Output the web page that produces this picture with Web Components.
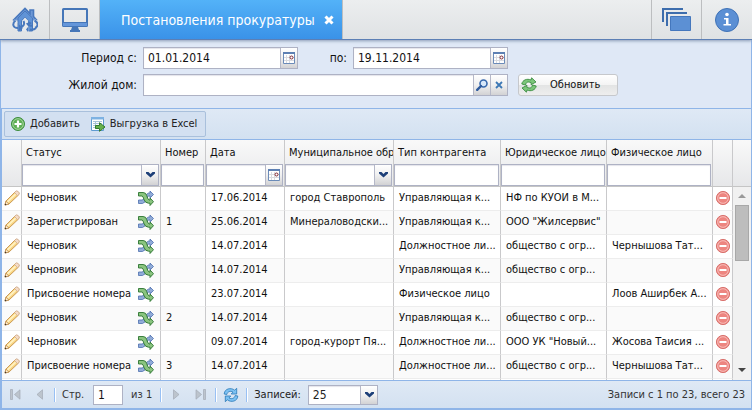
<!DOCTYPE html>
<html lang="ru">
<head>
<meta charset="utf-8">
<title>Постановления прокуратуры</title>
<style>
  body { margin: 0; font: 11px/16px "DejaVu Sans Condensed", "DejaVu Sans", sans-serif; color: #111; }
</style>
</head>
<body>
<registry-page></registry-page>
<script>
const ICONS = {
  home: ['0 0 26 26', `<g fill="none" stroke="#4878bd" stroke-linejoin="miter"><path d="M1 13.500L13 1.500l5 5V3h3.500v6.500L25 13.500" stroke-width="1.600" fill="#6d98d6"/><path d="M6 24V11l7-7 7.500 7v13h-4V14L13 10l-3.500 4v10z" fill="#6093d6" stroke-width="1"/></g><path d="M10 24V14l3-3.500 3.300 3.500v10z" fill="#e6e9ec"/><g fill="none" stroke="#e6e9ec" stroke-width="4"><path d="M4 14c-3 3-3 7 1 7M22 14c4 2 4 5 1 6.500"/></g><g fill="none" stroke="#4878bd" stroke-width="2"><path d="M3.500 13.500c-3.500 3-3 7.500 2.500 7.500M11.500 14c1.500 3 0 5.500-3 6M22.500 13.500c4 2 4 6 .5 7.500M24 21c-1.500 1.500-3.500 2-6 1.500M15 16c1 2.500 3 3 5 2.500"/></g><path d="M7 17.500l4 3.500-4 3zM20 16l-4-2v5zM16 20v5l-2-2.500z" fill="#4878bd"/>`],
  monitor: ['0 0 26 24', `<path fill="#4576b8" fill-rule="evenodd" d="M1.500 0h23Q26 0 26 1.500v16q0 1.500-1.500 1.500h-23Q0 19 0 17.500v-16Q0 0 1.500 0zM2 2v12h22V2z"/><path fill="#6496da" d="M1 15h24v3H1z"/><path fill="#4576b8" d="M10 19h6l1 3h1v2H8v-2h1z"/>`],
  windows: ['0 0 30 23', `<path fill="#3d6dad" d="M0 0h21v2H2v12H0zM4 4h21v2H6v12H4z"/><path fill="#5c90d4" stroke="#4477bd" d="M8.500 8.500h20v14h-20z"/>`],
  info: ['0 0 24 24', `<circle cx="12" cy="12" r="11.500" fill="#5b8fd4" stroke="#3f72b6"/><circle cx="12" cy="6.500" r="1.800" fill="#fff"/><path fill="#fff" d="M9 10h4.500v6H16v1.500H8.500V16H11v-4.500H9z"/>`],
  close: ['0 0 10 10', `<path d="M1.500 1.500l7 7M8.500 1.500l-7 7" stroke="#fff" stroke-width="3"/>`],
  calendar: ['0 0 12 12', `<path fill="#fff" stroke="#6b8bb8" d="M.5 1.500h11v10H.5z"/><path fill="#5d80b3" d="M0 0h12v2H0z"/><path stroke="#d9dbe0" d="M1 5.500h10M1 8.500h10M3.500 3v8M6.500 3v8"/><circle cx="8.500" cy="5.500" r="1.500" fill="#fff" stroke="#7d2430"/>`],
  search: ['0 0 12 12', `<circle cx="7.500" cy="4.500" r="3.500" fill="#d7e8fa" stroke="#3869ad" stroke-width="1.600"/><path d="M5 7L1.200 10.800" stroke="#2f5c9e" stroke-width="2.400" stroke-linecap="round"/>`],
  clear: ['0 0 8 8', `<path d="M1 1l6 6M7 1L1 7" stroke="#3d78b5" stroke-width="1.800"/>`],
  chevron: ['0 0 9 6', `<path d="M0 0h2.500L4.500 2 6.500 0H9v1.500L4.500 5.500 0 1.500z" fill="#1d3f78"/>`],
  refreshGreen: ['0 0 16 16', `<g fill="#7cc67a" stroke="#3c8d42" stroke-width=".9" stroke-linejoin="round"><path d="M.8 7C1.500 3 6 1.200 10 3l.6-2.200L15 5l-5 2.700.2-2C7 4.300 5 5 4.600 8z"/><path d="M15.200 9C14.500 13 10 14.800 6 13l-.6 2.200L1 11l5-2.700-.2 2C9 11.700 11 11 11.400 8z"/></g>`],
  refreshBlue: ['0 0 16 16', `<g fill="#7cc1f2" stroke="#2878b8" stroke-width=".8" stroke-linejoin="round"><path d="M1.200 7C1.500 1.500 8 .2 11.700 3.200l2-1.900V7H8.200l1.800-1.900C7.500 3.500 4.500 4.500 3.800 7.500z"/><path d="M14.800 9C14.500 14.500 8 15.800 4.300 12.800l-2 1.900V9h5.500L6 10.900c2.500 1.600 5.500.6 6.200-2.400z"/></g>`],
  add: ['0 0 16 16', `<circle cx="8" cy="8" r="6.500" fill="#5eae55" stroke="#3c8c3c"/><circle cx="8" cy="8" r="5.300" fill="none" stroke="#a5d69d"/><path d="M8 4.500v7M4.500 8h7" stroke="#fff" stroke-width="2.200"/>`],
  excel: ['0 0 16 16', `<path fill="#fff" stroke="#5f9bd0" d="M1.500 1.500h12v13h-12z"/><path fill="#7eb2e2" d="M1 1h13v2.500H1z"/><path stroke="#a9c3d8" d="M3 5.500h9M3 7.500h9M3 9.500h5M3 11.500h4M5.500 5v8"/><path fill="#67b14c" stroke="#327a2d" d="M5.500 9.500h4v-2.800L15 11l-5.500 4.300v-2.800h-4z"/>`],
  pencil: ['0 0 16 16', `<path d="M1 15l1-4L11 2Q12.500.8 14 2t.5 3L5 14z" fill="#f9d683" stroke="#c6924a" stroke-width=".9"/><path d="M3.500 11.800l8.500-8" stroke="#fff2c4" stroke-width="1.600"/><path d="M10.500 2.500l3 3.200 1.500-1.200Q16 2.800 14.200 1.500T11.500 1.500z" fill="#f5dcc8" stroke="#c9a382" stroke-width=".7"/><path d="M1 15l.9-3.800 3 2.800z" fill="#fff2d8" stroke="#b98340" stroke-width=".7"/><path d="M.7 15.300l.6-1.800 1.300 1.200z" fill="#333"/>`],
  shuffle: ['0 0 16 16', `<path fill="#91acd8" stroke="#4d6fae" stroke-width=".8" d="M.5 10h3.500Q6 10 7 7t3.500-4H12V1l3.500 3.500L12 8V6h-1.500Q9.500 6.300 9 9t-4.500 4.500h-4z"/><path fill="#8ac47f" stroke="#2b7430" stroke-width=".9" d="M.5 2.500H5q3 0 3.700 3T11 10h1V8l3.500 3.700L12 15.500v-2.300h-1.500Q7 13 6 9.500T4 6H.5z"/>`],
  remove: ['0 0 16 16', `<circle cx="8" cy="8" r="6.600" fill="#ed8580" stroke="#d9736f"/><circle cx="8" cy="8" r="5.300" fill="none" stroke="#f8bcb8"/><path fill="#fff" d="M4.500 7h7v2h-7z"/>`],
  first: ['0 0 11 11', `<path fill="#bcc4cd" stroke="#a3abb6" stroke-width=".7" d="M.5.500h2v10h-2zM10 .8v9.400L4.500 5.500z"/>`],
  prev: ['0 0 11 11', `<path fill="#bcc4cd" stroke="#a3abb6" stroke-width=".7" d="M8.500.8v9.400L3 5.500z"/>`],
  next: ['0 0 11 11', `<path fill="#bcc4cd" stroke="#a3abb6" stroke-width=".7" d="M2.500.8v9.400L8 5.500z"/>`],
  last: ['0 0 11 11', `<path fill="#bcc4cd" stroke="#a3abb6" stroke-width=".7" d="M8.500.500h2v10h-2zM1 .8v9.400L6.500 5.500z"/>`],
  up: ['0 0 8 4', `<path fill="#999" d="M0 4l4-4 4 4z"/>`],
  down: ['0 0 8 4', `<path fill="#444" d="M0 0l4 4 4-4z"/>`]
};

const base = `<style>
  *, ::before, ::after { box-sizing: border-box; }
  :host([hidden]) { display: none; }
  button, input, select { font: inherit; color: inherit; margin: 0; padding: 0; border: 0; border-radius: 0; background: none; appearance: none; min-width: 0; outline-offset: -1px; }
  button { display: flex; align-items: center; justify-content: center; cursor: pointer; }
</style>`;

class Base extends HTMLElement {
  connectedCallback() {
    if (this.shadowRoot) return;
    const t = document.createElement('template');
    t.innerHTML = base + this.render();
    this.attachShadow({ mode: 'open' }).append(t.content.cloneNode(true));
  }
}

customElements.define('ui-icon', class extends Base {
  render() {
    const [box, body] = ICONS[this.getAttribute('name')];
    const [, , w, h] = box.split(' ');
    return `<style>:host { display: inline-flex; flex: none; } svg { display: block; }</style>
      <svg width="${w}" height="${h}" viewBox="${box}" aria-hidden="true">${body}</svg>`;
  }
});

/* Text box with optional trigger buttons; kind: text | date | combo | lookup */
customElements.define('ui-field', class extends Base {
  render() {
    const kind = this.getAttribute('kind') || 'text';
    const label = this.getAttribute('label');
    const aria = this.getAttribute('aria') || '';
    const value = this.getAttribute('value') || '';
    const name = label ? '' : `aria-label="${aria}"`;
    const control = kind === 'combo'
      ? `<select id="c" ${name}><option>${value}</option></select><span class="trigger over"><ui-icon name="chevron"></ui-icon></span>`
      : `<input id="c" type="text" value="${value}" ${name}>`;
    const extra = {
      date: `<button class="trigger" type="button" aria-label="Календарь"><ui-icon name="calendar"></ui-icon></button>`,
      lookup: `<button class="trigger" type="button" aria-label="Выбрать"><ui-icon name="search"></ui-icon></button><button class="trigger" type="button" aria-label="Очистить"><ui-icon name="clear"></ui-icon></button>`
    }[kind] || '';
    return `<style>
      :host { display: flex; align-items: center; gap: 6px; min-width: 0; }
      label { flex: none; width: var(--label-width, auto); text-align: right; white-space: nowrap; }
      .box { flex: 1; min-width: 0; display: flex; position: relative; height: var(--field-height, 22px); border: 1px solid #aeb2c4; background: #fff; box-shadow: inset 0 1px 1px #e4e4ea; }
      input, select { flex: 1; width: 100%; padding: 0 4px; font-size: 12px; }
      .trigger { flex: none; width: 17px; display: flex; align-items: center; justify-content: center; border-left: 1px solid #b5b8c8; background: linear-gradient(#fff, #f0f0f0 50%, #d2d2d4); }
      .over { position: absolute; top: 0; right: 0; bottom: 0; pointer-events: none; }
    </style>
    ${label ? `<label for="c">${label}</label>` : ''}<div class="box">${control}${extra}</div>`;
  }
});

customElements.define('app-header', class extends Base {
  render() {
    return `<style>
      :host { display: flex; flex: none; height: 40px; background: linear-gradient(#eceeef, #dfe2e4); border-bottom: 1px solid #5c7fb5; box-shadow: 0 1px 3px #8a9bb5; position: relative; }
      nav { display: flex; flex: 1; min-width: 0; }
      button { flex: none; width: 50px; border-right: 1px solid #bcbec0; }
      .right button { border-right: 0; border-left: 1px solid #bcbec0; }
      .right button:last-child { width: 51px; }
      .right { display: flex; }
      .tab { display: flex; align-items: center; gap: 9px; padding: 0 8px 0 21px; background: linear-gradient(#53b2f8, #3a92e8); border-right: 1px solid #bcbec0; color: #fff; }
      .tab a { color: inherit; text-decoration: none; font-size: 14px; white-space: nowrap; }
      .tab button { width: 10px; border: 0; }
    </style>
    <nav>
      <button type="button" aria-label="Главная"><ui-icon name="home"></ui-icon></button>
      <button type="button" aria-label="Рабочий стол"><ui-icon name="monitor"></ui-icon></button>
      <div class="tab"><a href="#">Постановления прокуратуры</a><button type="button" aria-label="Закрыть"><ui-icon name="close"></ui-icon></button></div>
    </nav>
    <div class="right">
      <button type="button" aria-label="Окна"><ui-icon name="windows"></ui-icon></button>
      <button type="button" aria-label="Информация"><ui-icon name="info"></ui-icon></button>
    </div>`;
  }
});

customElements.define('filter-form', class extends Base {
  render() {
    return `<style>
      :host { display: block; flex: none; background: #dfe8f6; padding: 7px 0 12px; font-size: 12px; }
      form { display: grid; grid-template-columns: 297px 210px 110px; row-gap: 5px; }
      .first { --label-width: 136px; }
      .to { --label-width: 49px; }
      .house { grid-column: span 2; }
      button { height: 22px; margin-left: 10px; width: 100px; justify-content: flex-start; padding: 0 2px; gap: 13px; border: 1px solid #c6c8cc; border-radius: 3px; background: linear-gradient(#fff, #f4f4f4 48%, #e3e4e4 52%, #eeeeee); font-size: 11px; }
    </style>
    <form>
      <ui-field class="first" kind="date" label="Период с:" value="01.01.2014"></ui-field>
      <ui-field class="to" kind="date" label="по:" value="19.11.2014"></ui-field>
      <span></span>
      <ui-field class="first house" kind="lookup" label="Жилой дом:"></ui-field>
      <button type="button"><ui-icon name="refreshGreen"></ui-icon>Обновить</button>
    </form>`;
  }
});

customElements.define('action-bar', class extends Base {
  render() {
    return `<style>
      :host { display: flex; flex: none; padding: 2px; border-bottom: 1px solid #8fb5e8; background: linear-gradient(#dfe9f5, #d3e1f1); }
      div { display: flex; gap: 10px; padding: 0 8px 0 5px; height: 26px; border: 1px solid #a9c0dc; border-radius: 2px; background: #d3e0f1; }
      button { gap: 4px; color: #222; white-space: nowrap; }
    </style>
    <div>
      <button type="button"><ui-icon name="add"></ui-icon>Добавить</button>
      <button type="button"><ui-icon name="excel"></ui-icon>Выгрузка в Excel</button>
    </div>`;
  }
});

const COLUMNS = [
  ['Статус', 139, 'combo'], ['Номер', 45, 'text'], ['Дата', 79, 'date'],
  ['Муниципальное обра', 109, 'combo'], ['Тип контрагента', 107, 'text'],
  ['Юридическое лицо', 106, 'text'], ['Физическое лицо', 106, 'text']
];
const ROWS = [
  ['Черновик', '', '17.06.2014', 'город Ставрополь', 'Управляющая к...', 'НФ по КУОИ в М...', ''],
  ['Зарегистрирован', '1', '25.06.2014', 'Минераловодски...', 'Управляющая к...', 'ООО "Жилсервис"', ''],
  ['Черновик', '', '14.07.2014', '', 'Должностное ли...', 'общество с огр...', 'Чернышова Тат...'],
  ['Черновик', '', '14.07.2014', '', 'Управляющая к...', 'общество с огр...', ''],
  ['Присвоение номера', '', '23.07.2014', '', 'Физическое лицо', '', 'Лоов Аширбек А...'],
  ['Черновик', '2', '14.07.2014', '', 'Управляющая к...', 'общество с огр...', ''],
  ['Черновик', '', '09.07.2014', 'город-курорт Пя...', 'Должностное ли...', 'ООО УК "Новый...', 'Жосова Таисия ...'],
  ['Присвоение номера', '3', '14.07.2014', '', 'Должностное ли...', 'общество с огр...', 'Чернышова Тат...'],
  ['', '', '', '', '', '', '']
];

customElements.define('data-grid', class extends Base {
  render() {
    const head = COLUMNS.map(([title, , kind]) =>
      `<th scope="col"><span class="title">${title}</span><ui-field kind="${kind}" aria="Фильтр: ${title}"></ui-field></th>`).join('');
    const rows = ROWS.map(r => {
      const real = r[0] !== '';
      const cells = r.map((c, i) => i === 0
        ? `<td><div class="status"><span class="text">${c}</span>${real ? '<button type="button" aria-label="Сменить статус"><ui-icon name="shuffle"></ui-icon></button>' : ''}</div></td>`
        : `<td class="text">${c}</td>`).join('');
      const btn = (icon, t) => real ? `<button type="button" aria-label="${t}"><ui-icon name="${icon}"></ui-icon></button>` : '';
      return `<tr><td class="tool">${btn('pencil', 'Изменить')}</td>${cells}<td class="tool">${btn('remove', 'Удалить')}</td></tr>`;
    }).join('');
    return `<style>
      :host { display: grid; grid-template-columns: minmax(0, 1fr) 18px; flex: 1; min-height: 0; overflow: hidden; background: #fff; }
      .view { overflow: hidden; min-height: 0; }
      table { width: 100%; table-layout: fixed; border-collapse: separate; border-spacing: 0; }
      th, td { padding: 0; border-right: 1px solid #c9c9cb; text-align: left; font-weight: normal; }
      th { height: 47px; vertical-align: top; border-bottom: 1px solid #c5c5c5; }
      thead tr, .stub { background: linear-gradient(#f9f9f9, #e6e7e9); }
      .title { display: block; height: 24px; padding: 5px 0 0 4px; overflow: hidden; white-space: nowrap; line-height: 16px; }
      th ui-field { margin-right: 1px; }
      td { height: 24px; border-bottom: 1px solid #ededed; padding: 0 0 2px 5px; }
      tbody tr:nth-child(even) { background: #fafafa; }
      .text { overflow: hidden; text-overflow: ellipsis; white-space: nowrap; }
      .status { display: flex; align-items: center; padding-right: 6px; }
      .status .text { flex: 1; }
      .tool { padding: 0 0 2px; }
      .tool button { width: 100%; }
      .side { display: flex; flex-direction: column; min-height: 0; }
      .stub { height: 47px; flex: none; border-bottom: 1px solid #c5c5c5; }
      .scroll { flex: 1; display: flex; flex-direction: column; align-items: center; padding: 7px 1px 8px; background: #f1f1f1; }
      .thumb { width: 14px; height: 56px; margin: 7px 0 auto; background: #bdbdbd; border: 1px solid #a8a8a8; }
    </style>
    <div class="view"><table>
      <colgroup><col style="width:20px">${COLUMNS.map(c => `<col style="width:${c[1]}px">`).join('')}<col style="width:20px"></colgroup>
      <thead><tr><th></th>${head}<th></th></tr></thead>
      <tbody>${rows}</tbody>
    </table></div>
    <div class="side"><div class="stub"></div><div class="scroll"><ui-icon name="up"></ui-icon><div class="thumb"></div><ui-icon name="down"></ui-icon></div></div>`;
  }
});

customElements.define('grid-pager', class extends Base {
  render() {
    return `<style>
      :host { display: flex; flex: none; align-items: center; height: 28px; padding: 0 6px 0 1px; border-top: 1px solid #8fb5e8; background: linear-gradient(#dfe9f5, #d3e1f1); color: #333; }
      button { width: 24px; height: 22px; flex: none; }
      i { flex: none; width: 1px; height: 14px; margin: 0 3px; background: #98c0f4; box-shadow: 1px 0 #fff; }
      label, span { white-space: nowrap; }
      .page { width: 30px; height: 20px; flex: none; padding: 0 4px; border: 1px solid #aeb2c4; background: #fff; color: #111; font-size: 12px; }
      label { display: flex; align-items: center; gap: 9px; margin: 0 8px 0 4px; }
      .count { margin-right: 5px; }
      ui-field { --field-height: 20px; gap: 7px; width: 124px; margin-left: 4px; color: #222; }
      .total { margin-left: auto; }
    </style>
    <button type="button" aria-label="Первая страница"><ui-icon name="first"></ui-icon></button>
    <button type="button" aria-label="Предыдущая страница"><ui-icon name="prev"></ui-icon></button><i></i>
    <label>Стр. <input class="page" type="text" value="1"></label><span class="count">из 1</span><i></i>
    <button type="button" aria-label="Следующая страница"><ui-icon name="next"></ui-icon></button>
    <button type="button" aria-label="Последняя страница"><ui-icon name="last"></ui-icon></button><i></i>
    <button type="button" aria-label="Обновить список"><ui-icon name="refreshBlue"></ui-icon></button><i></i>
    <ui-field kind="combo" label="Записей:" value="25"></ui-field>
    <span class="total">Записи с 1 по 23, всего 23</span>`;
  }
});

customElements.define('registry-page', class extends Base {
  render() {
    return `<style>
      :host { display: flex; flex-direction: column; height: 100vh; background: #dfe8f6; }
      main { flex: 1; min-height: 0; display: flex; flex-direction: column; border: 1px solid #8fb5e8; border-top: 0; }
      section { flex: 1; min-height: 0; display: flex; flex-direction: column; border: 1px solid #8fb5e8; border-right: 0; }
    </style>
    <app-header></app-header>
    <main>
      <filter-form></filter-form>
      <section><action-bar></action-bar><data-grid></data-grid><grid-pager></grid-pager></section>
    </main>`;
  }
});
</script>
</body>
</html>
